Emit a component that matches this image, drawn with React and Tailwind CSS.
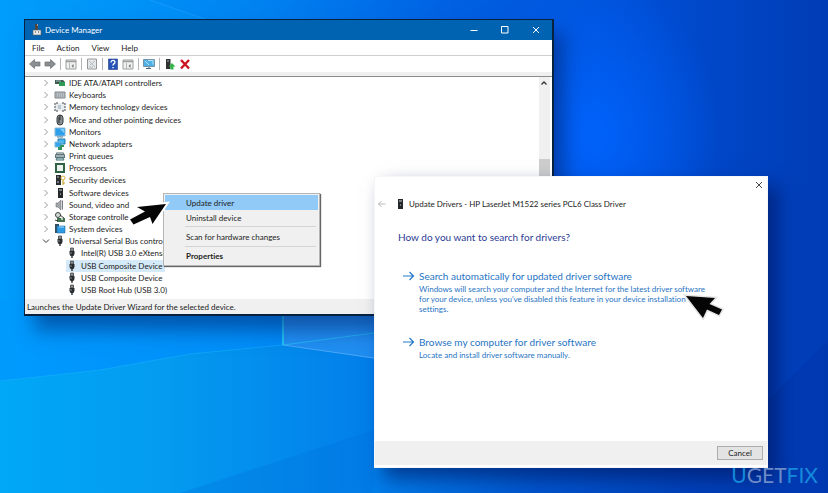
import classNames from 'clsx'

const MENUS = ['File', 'Action', 'View', 'Help']

const CATEGORIES = [
  { name: 'IDE ATA/ATAPI controllers', icon: 'ide' },
  { name: 'Keyboards', icon: 'keyboard' },
  { name: 'Memory technology devices', icon: 'memory' },
  { name: 'Mice and other pointing devices', icon: 'mouse' },
  { name: 'Monitors', icon: 'monitor' },
  { name: 'Network adapters', icon: 'network' },
  { name: 'Print queues', icon: 'printer' },
  { name: 'Processors', icon: 'processor' },
  { name: 'Security devices', icon: 'security' },
  { name: 'Software devices', icon: 'software' },
  { name: 'Sound, video and', icon: 'sound' },
  { name: 'Storage controlle', icon: 'storage' },
  { name: 'System devices', icon: 'system' },
  { name: 'Universal Serial Bus contro', icon: 'usb', open: true },
]

const USB_DEVICES = [
  { name: 'Intel(R) USB 3.0 eXtensi' },
  { name: 'USB Composite Device', selected: true },
  { name: 'USB Composite Device' },
  { name: 'USB Root Hub (USB 3.0)' },
]

const TOOLBAR = [
  ['back', 'forward'],
  ['pane'],
  ['refresh'],
  ['help', 'pane'],
  ['scan'],
  ['update', 'remove'],
]

const OPTIONS = [
  {
    title: 'Search automatically for updated driver software',
    lines: [
      'Windows will search your computer and the Internet for the latest driver software',
      "for your device, unless you've disabled this feature in your device installation",
      'settings.',
    ],
  },
  {
    title: 'Browse my computer for driver software',
    lines: ['Locate and install driver software manually.'],
  },
]

const ICONS = {
  ide: (
    <>
      <path d="M1 3h8l2 2v4H5V7H1z" fill="#3f5b50" />
      <path d="M5 5h6v4H5z" fill="#2f9a55" />
      <path d="M2 4h5" stroke="#9bb" />
    </>
  ),
  keyboard: (
    <>
      <path d="M1 3h10v6H1z" fill="#b9bec2" stroke="#7d8489" />
      <path d="M2 5h8M2 7h8" stroke="#8c9398" strokeDasharray="1 1" />
    </>
  ),
  memory: (
    <>
      <path d="M1 2h10v8H1z" fill="#e8ecef" />
      <path d="M4 2H1v8h3M8 2h3v8H8" fill="none" stroke="#3f474d" strokeDasharray="2 1" />
      <path d="M4 4h3v4H4z" fill="#b9c6cf" />
    </>
  ),
  mouse: (
    <>
      <rect x="3" y="1" width="6" height="10" rx="3" fill="#8b9094" stroke="#34383b" />
      <path d="M6 1v5M5 3v6" stroke="#2a2d2f" />
    </>
  ),
  monitor: (
    <>
      <path d="M1 2h10v8H1z" fill="#2f9eea" stroke="#8cb9d8" />
      <path d="M6 3h4v4z" fill="#7bcdfb" />
      <path d="M3 11h6" stroke="#5a7f9a" />
    </>
  ),
  network: (
    <>
      <path d="M4 1h7v5H4z" fill="#45b6f1" stroke="#2579ad" />
      <path d="M1 4h7v5H1z" fill="#35a6ed" stroke="#7cb7d6" />
      <path d="M5 9v2h2V8h3" stroke="#32955e" strokeWidth="2" fill="none" />
    </>
  ),
  printer: (
    <>
      <path d="M3 2h6l2 3v3H1V5z" fill="#5c7478" />
      <path d="M3 3h6M2 6h8" stroke="#e5edef" />
      <path d="M3 8h6l1 2H2z" fill="#d6e9ec" stroke="#477077" />
    </>
  ),
  processor: (
    <>
      <path d="M1 1h10v10H1z" fill="#2d6344" />
      <path d="M3 3h6v6H3z" fill="#eef2ee" />
    </>
  ),
  security: (
    <>
      <path d="M2 1h5v10H2z" fill="#2c2f31" />
      <path d="M3 3h2M3 8h2" stroke="#bdc3c7" />
      <circle cx="9" cy="4" r="2" fill="none" stroke="#d8b33a" />
      <path d="M9 6v5M9 9h2" stroke="#c09a20" />
    </>
  ),
  software: (
    <>
      <path d="M4 1h5v10H4z" fill="#25282a" />
      <path d="M5 3h3M6 7h1" stroke="#cfd4d6" />
    </>
  ),
  sound: (
    <>
      <path d="M2 4h2l3-3v10L4 8H2z" fill="#a0a5a8" stroke="#6e7478" strokeWidth=".6" />
      <path d="M8.500 1.500v9" stroke="#777d81" />
    </>
  ),
  storage: (
    <>
      <circle cx="4" cy="4" r="2.5" fill="#d5dad6" stroke="#3c4641" />
      <path d="M3 7h8v4H3z" fill="#44714f" />
      <path d="M6 4l4 3M1 9l3 1" stroke="#39423d" />
      <circle cx="8" cy="8" r="1" fill="#dde8df" />
    </>
  ),
  system: (
    <>
      <path d="M1 1h4v9H1z" fill="#34505f" />
      <path d="M3 3h8v7H3z" fill="#2f9be3" stroke="#1f6ea8" strokeWidth=".6" />
      <path d="M5 4h5" stroke="#a5dcfb" />
    </>
  ),
  usb: (
    <>
      <path d="M4.500 1h3v3h-3z" fill="#8d9194" stroke="#33373a" strokeWidth=".7" />
      <path d="M3.500 4h5v3l-1 2h-3l-1-2z" fill="#2a2d2f" />
      <path d="M6 8v3" stroke="#2a2d2f" strokeWidth="1.4" />
      <path d="M5 5v2" stroke="#a8adb0" strokeWidth=".7" />
    </>
  ),
  back: <path d="M.5 6l5-4.500V4H11v4H5.500v2.500z" fill="#8a8f92" stroke="#6a6e70" strokeWidth=".7" />,
  forward: <path d="M11.500 6l-5-4.500V4H1v4h5.500v2.500z" fill="#8a8f92" stroke="#6a6e70" strokeWidth=".7" />,
  pane: (
    <>
      <path d="M1 2h10v9H1z" fill="#f1f1ee" stroke="#9b9e9f" />
      <path d="M1 3.500h10" stroke="#9b9e9f" strokeWidth="1.500" />
      <path d="M4.500 5v6" stroke="#b5b8b9" />
      <path d="M8.500 6v4l-2-2z" fill="#6d7275" />
    </>
  ),
  refresh: (
    <>
      <path d="M1.500 1h9v10h-9z" fill="#e5e7e8" stroke="#94989b" />
      <path d="M3 3l6 6M9 3L4 7M3 9h4" stroke="#b5bbbe" />
    </>
  ),
  help: (
    <>
      <path d="M1.500 1h9v10.500h-9z" fill="#2753b8" stroke="#1c3c86" strokeWidth=".6" />
      <path d="M4 4.500c0-3 4-2.500 4-.3C8 5.800 6 5.500 6 7.500M6 9v1.300" fill="none" stroke="#fff" strokeWidth="1.300" />
    </>
  ),
  scan: (
    <>
      <path d="M.5 1.500h11v7H.5z" fill="#4fb0e6" stroke="#7493a6" />
      <path d="M2 3l4 4M5 2.500h5v4" stroke="#b8e3f8" fill="none" />
      <path d="M3 10.500h5M6 9v2" stroke="#4d6a7c" />
    </>
  ),
  update: (
    <>
      <path d="M2 1h4.500v10H2z" fill="#2d3133" />
      <path d="M3 3h2M6 10h3" stroke="#aab0b2" />
      <path d="M8 5l3.500 3.500H9.500v3h-3v-3h-2z" fill="#34b44a" />
    </>
  ),
  remove: <path d="M2 2l8 8.500M10 2l-8 8.500" stroke="#cc1420" strokeWidth="2.400" />,
}

function Icon({ name, className }) {
  return (
    <svg viewBox="0 0 12 12" aria-hidden="true" className={classNames('size-3 shrink-0', className)}>
      {ICONS[name]}
    </svg>
  )
}

function App() {
  return (
    <main className="relative min-h-screen w-full overflow-hidden bg-[#0590ea] font-[Lato,sans-serif] text-[8px] leading-3 text-[#1c1c1c] [font-variant-ligatures:none]">
      <Wallpaper />
      <DeviceManager />
      <UpdateWizard />
      <p className="absolute right-2.5 bottom-1.5 flex text-[21px] leading-6 text-[#6c8bc9]">
        <span className="text-[#1589dc]">U</span>GET<span className="text-[#1589dc]">FIX</span>
      </p>
    </main>
  )
}

function DeviceManager() {
  return (
    <section className="absolute top-[19px] left-6 flex w-[64%] flex-col border border-r-2 border-b-2 border-[#08213f] bg-white shadow-[10px_14px_18px_rgba(0,30,100,0.5)]">
      <header className="flex h-5 items-center bg-[#0063b1] pl-1.5 text-white">
        <svg viewBox="0 0 12 12" aria-hidden="true" className="size-3">
          <path d="M4 0h3v6H4z" fill="#4c4540" />
          <path d="M2 6h8v5H2z" fill="#e6e8e9" stroke="#5b5f61" strokeWidth=".6" />
          <path d="M4 8h1M7 8h1" stroke="#333" />
          <path d="M6 1h1" stroke="#eee" />
        </svg>
        <h1 className="ml-0.5">Device Manager</h1>
        <div className="ml-auto flex">
          <button type="button" aria-label="Minimize" className="flex w-[31px] justify-center">
            <svg viewBox="0 0 8 8" className="size-2"><path d="M.5 4.500h7" stroke="#fff" /></svg>
          </button>
          <button type="button" aria-label="Maximize" className="flex w-[31px] justify-center">
            <svg viewBox="0 0 8 8" className="size-2"><path d="M.5 .5h6.500v6.500H.5z" fill="none" stroke="#fff" /></svg>
          </button>
          <button type="button" aria-label="Close" className="flex w-[31px] justify-center">
            <svg viewBox="0 0 8 8" className="size-2"><path d="M1 1l6 6M7 1L1 7" stroke="#fff" /></svg>
          </button>
        </div>
      </header>

      <nav className="flex h-4 items-center gap-3 border-b border-[#cfcfcf] pl-[7px]">
        {MENUS.map((name) => (
          <button key={name} type="button">
            {name}
          </button>
        ))}
      </nav>

      <div className="flex h-4 items-center">
        {TOOLBAR.map((group, index) => (
          <div
            key={index}
            className={classNames('flex gap-[3px] px-1', {
              'border-l border-[#b5b5b5]': index > 0,
            })}
          >
            {group.map((name) => (
              <button key={name} type="button" aria-label={name}>
                <Icon name={name} />
              </button>
            ))}
          </div>
        ))}
      </div>
      <div className="h-[5px] border-b border-[#8c8c8c] bg-[#f0f0f0]" />

      <div className="flex h-[222px]">
        <ul className="flex flex-1 flex-col pb-[3px] pl-[17px]">
          {CATEGORIES.map(({ name, icon, open }) => (
            <li key={name} className="flex flex-1 items-center">
              <svg viewBox="0 0 8 8" aria-hidden="true" className="size-2">
                <path
                  d={open ? 'M1 2.500l3 3 3-3' : 'M2.500 1l3 3-3 3'}
                  fill="none"
                  stroke={open ? '#333' : '#999'}
                />
              </svg>
              <Icon name={icon} className="ml-1" />
              <span className="ml-[3px] whitespace-nowrap">{name}</span>
            </li>
          ))}
          {USB_DEVICES.map(({ name, selected }, index) => (
            <li key={index} className="flex flex-1 items-center pl-6">
              <span
                className={classNames('flex h-full items-center pr-0.5', {
                  'bg-[#d5eaf8]': selected,
                })}
              >
                <Icon name="usb" />
                <span className="ml-[3px] whitespace-nowrap">{name}</span>
              </span>
            </li>
          ))}
        </ul>
        <div className="mr-0.5 flex w-[11px] flex-col items-center bg-[#f0f0f0] pt-0.5">
          <svg viewBox="0 0 8 8" aria-hidden="true" className="size-2">
            <path d="M1.500 5.500L4 3l2.500 2.500" fill="none" stroke="#333" strokeWidth="1.300" />
          </svg>
          <div className="mt-[72px] h-12 w-full bg-[#cdcdcd]" />
        </div>
      </div>

      <footer className="h-[15px] bg-[#f0f0f0] pt-0.5 pl-0.5">
        Launches the Update Driver Wizard for the selected device.
      </footer>

      <ContextMenu />
      <svg
        viewBox="128 198 46 34"
        aria-hidden="true"
        className="absolute top-[178px] left-[103px] h-[34px] w-[46px]"
      >
        <path
          d="M166 204L137 207L145 211.500L130 219.500L133.500 224.500L150 217L152.500 224z"
          fill="#050505"
          stroke="#fff"
          strokeWidth="4"
          paintOrder="stroke"
        />
      </svg>
    </section>
  )
}

function ContextMenu() {
  return (
    <div className="absolute top-[173px] left-[138px] flex w-[157px] flex-col border border-[#b5b5b5] bg-[#f0f0f0] p-px shadow-[1px_1px_1px_#666]">
      <button type="button" className="h-[15px] bg-[#91c9f7] pl-[21px] text-left">
        Update driver
      </button>
      <button type="button" className="h-4 pl-[21px] text-left">
        Uninstall device
      </button>
      <hr className="mr-0.5 ml-5 border-[#d5d5d5]" />
      <button type="button" className="h-[19px] pl-[21px] text-left">
        Scan for hardware changes
      </button>
      <hr className="mr-0.5 ml-5 border-[#d5d5d5]" />
      <button type="button" className="h-[17px] pl-[21px] text-left font-bold">
        Properties
      </button>
    </div>
  )
}

function UpdateWizard() {
  return (
    <section className="absolute top-44 right-[60px] left-[374px] flex flex-col border border-[#f6f6f6] bg-white shadow-[10px_10px_18px_rgba(0,20,90,0.6)]">
      <div className="flex justify-end pt-1 pr-1">
        <button type="button" aria-label="Close">
          <svg viewBox="0 0 8 8" className="size-2"><path d="M1 1l6 6M7 1L1 7" stroke="#333" strokeWidth=".9" /></svg>
        </button>
      </div>

      <header className="mt-[9px] flex h-3 items-center pl-[3px]">
        <button type="button" aria-label="Back">
          <svg viewBox="0 0 8 8" className="size-2">
            <path d="M.5 4h7M3.500 1L.5 4l3 3" fill="none" stroke="#aaa" strokeWidth=".8" />
          </svg>
        </button>
        <Icon name="software" className="ml-2" />
        <h2 className="ml-[3px]">Update Drivers - HP LaserJet M1522 series PCL6 Class Driver</h2>
      </header>

      <div className="h-[231px] pt-[19px] pl-[23px]">
        <h3 className="text-[10px] leading-4 text-[#2b3a94]">How do you want to search for drivers?</h3>
        <div className="mt-[23px] flex flex-col items-start gap-5">
          {OPTIONS.map(({ title, lines }) => (
            <button key={title} type="button" className="flex min-h-9 pl-1 text-left text-[#1f74c4]">
              <svg viewBox="0 0 13 10" aria-hidden="true" className="mt-[3px] h-2.5 w-[13px] shrink-0">
                <path d="M1 5h10.500M7.500 1l4 4-4 4" fill="none" stroke="#2378c8" strokeWidth="1.200" />
              </svg>
              <span className="ml-1">
                <span className="block text-[10px] leading-4">{title}</span>
                {lines.map((line) => (
                  <span key={line} className="block leading-[10px] whitespace-nowrap">
                    {line}
                  </span>
                ))}
              </span>
            </button>
          ))}
        </div>
      </div>

      <footer className="mb-0.5 flex h-6 items-center justify-end bg-[#f0f0f0] pr-1">
        <button type="button" className="h-3.5 w-[46px] border border-[#adadad] bg-[#e3e3e3]">
          Cancel
        </button>
      </footer>

      <svg
        viewBox="682 292 46 32"
        aria-hidden="true"
        className="absolute top-[115px] right-10 h-8 w-[46px]"
      >
        <path
          d="M687 296L716 298L710.500 304L723 309.500L720 315L708 309.500L704 318z"
          fill="#050505"
          stroke="#e4e4e4"
          strokeWidth="3"
          paintOrder="stroke"
        />
      </svg>
    </section>
  )
}

function Wallpaper() {
  return (
    <svg
      viewBox="0 0 828 493"
      preserveAspectRatio="none"
      aria-hidden="true"
      className="absolute inset-0 h-full w-full"
    >
      <defs>
        <linearGradient id="sky" x1="0" y1="0" x2="1" y2="0">
          <stop offset="0" stopColor="#009dfb" />
          <stop offset=".3" stopColor="#0084f2" />
          <stop offset=".55" stopColor="#0060e2" />
          <stop offset=".75" stopColor="#0050d8" />
          <stop offset="1" stopColor="#003cb4" />
        </linearGradient>
        <linearGradient id="floor" x1="0" y1="0" x2="1" y2="0">
          <stop offset="0" stopColor="#00a8f6" />
          <stop offset=".2" stopColor="#049bf0" />
          <stop offset=".45" stopColor="#027eea" />
          <stop offset=".65" stopColor="#0054cc" />
          <stop offset=".85" stopColor="#0040b8" />
          <stop offset="1" stopColor="#0038b0" />
        </linearGradient>
        <radialGradient id="glow">
          <stop offset="0" stopColor="#0064ff" stopOpacity=".9" />
          <stop offset="1" stopColor="#0064ff" stopOpacity="0" />
        </radialGradient>
      </defs>
      <path d="M0 0h828v493H0z" fill="url(#sky)" />
      <ellipse cx="590" cy="135" rx="130" ry="160" fill="url(#glow)" />
      <path d="M0 0h150l55 19L0 120z" fill="#00a2ff" opacity=".2" />
      <path d="M150 0l55 19" stroke="#2aa4ff" opacity=".5" />
      <path d="M0 381L100 370L190 354L283 345L374 358V300H0z" fill="#0098ff" opacity=".5" />
      <path d="M0 381L100 370L190 354L283 345L374 358L768 400L828 340V493H0z" fill="url(#floor)" />
      <path d="M0 381L100 370L190 354L283 345" fill="none" stroke="#16b0ff" opacity=".6" />
      <path d="M283 310h100v50L283 345z" fill="#2890f0" opacity=".8" />
      <path d="M283 345L374 333" stroke="#25b4f5" />
      <path d="M283 345L374 358" stroke="#48a8f8" />
      <path d="M283 310V345" stroke="#25d4f5" strokeWidth="1.500" />
      <path d="M180 493L374 430V493z" fill="#0070dc" opacity=".3" />
    </svg>
  )
}

export default App
